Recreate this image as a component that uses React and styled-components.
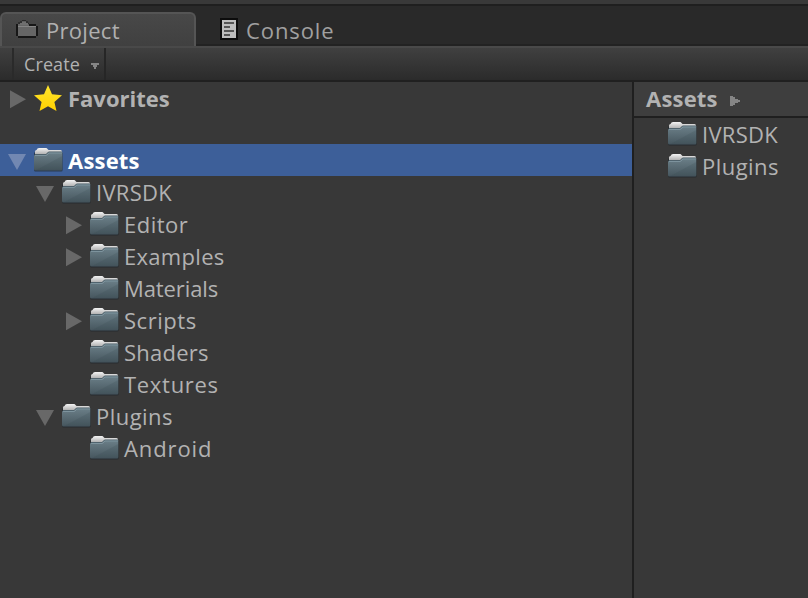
import React from "react";
import styled, { createGlobalStyle } from "styled-components";

const GlobalStyle = createGlobalStyle`
  * { box-sizing: border-box; }
  body { margin: 0; background: #383838; overflow: hidden; }
`;

const Window = styled.div`
  width: 808px;
  height: 598px;
  display: flex;
  flex-direction: column;
  background: #383838;
  color: #b2b2b2;
  font-family: "Open Sans", "Noto Sans", sans-serif;
  font-size: 22px;
  font-kerning: none;
  overflow: hidden;
`;

const TabBar = styled.div`
  flex: none;
  height: 46px;
  display: flex;
  align-items: flex-end;
  padding-top: 6px;
  background: linear-gradient(#393939 0 4px, #1f1f1f 4px 6px, #292929 6px 44px, #222222 44px);
`;

const Tab = styled.div`
  width: ${(p) => p.$width}px;
  height: 34px;
  display: flex;
  align-items: flex-start;
  padding-left: ${(p) => p.$pad}px;
  border: solid ${(p) => (p.$active ? "#555555" : "transparent")};
  border-width: 2px 2px 0 2px;
  border-radius: 6px 6px 0 0;
  background: ${(p) => (p.$active ? "linear-gradient(#484848, #404040)" : "transparent")};
  color: ${(p) => (p.$active ? "#b0b0b0" : "#a0a0a0")};
`;

const TabIcon = styled.svg`
  flex: none;
  display: block;
  margin-top: ${(p) => p.$top}px;
  margin-right: ${(p) => p.$gap}px;
`;

const Label = styled.span`
  line-height: 32px;
  white-space: nowrap;
  letter-spacing: ${(p) => p.$track}px;
  font-weight: ${(p) => (p.$bold ? 700 : 400)};
`;

const Toolbar = styled.div`
  flex: none;
  height: 36px;
  display: flex;
  padding-left: 12px;
  border-top: 2px solid #494949;
  border-bottom: 2px solid #202020;
  background: linear-gradient(#404040, #2b2b2b);
`;

const CreateButton = styled.div`
  width: 94px;
  display: flex;
  align-items: center;
  padding-left: 10px;
  border-left: 2px solid #2a2a2a;
  border-right: 2px solid #262626;
  font-size: 18px;
`;

const Caret = styled.svg`
  display: block;
  margin: 4px 0 0 10px;
`;

const Body = styled.div`
  flex: 1;
  display: flex;
  min-height: 0;
`;

const Tree = styled.div`
  width: 632px;
  display: flex;
  flex-direction: column;
`;

const Row = styled.div`
  flex: none;
  height: 32px;
  display: flex;
  align-items: flex-start;
  padding-left: ${(p) => 8 + p.$depth * 28}px;
  margin-bottom: ${(p) => p.$gap || 0}px;
  background: ${(p) => (p.$selected ? "#3d5f99" : "transparent")};
  color: ${(p) => (p.$selected ? "#ffffff" : "inherit")};
`;

const ArrowSlot = styled.div`
  width: 26px;
  height: 32px;
  color: ${(p) => (p.$selected ? "#7288b2" : "#686868")};
`;

const ItemIcon = styled.svg`
  flex: none;
  display: block;
  width: 30px;
  height: 32px;
  margin-right: ${(p) => p.$gap}px;
`;

const Content = styled.div`
  flex: 1;
  border-left: 2px solid #1f1f1f;
`;

const Breadcrumb = styled.div`
  height: 36px;
  display: flex;
  padding-left: 12px;
  background: #3e3e3e;
  border-bottom: 2px solid #1f1f1f;
`;

const CrumbArrow = styled.svg`
  display: block;
  margin: 14px 0 0 12px;
`;

const Entry = styled.div`
  height: 32px;
  display: flex;
  padding-left: 34px;
`;

function Arrow({ open, selected }) {
  return (
    <ArrowSlot $selected={selected}>
      <svg width="26" height="32" viewBox="0 0 26 32" fill="currentColor">
        {open ? <path d="M0 10H18L9 26Z" /> : <path d="M2 8.2V26.2L18 17.2Z" />}
      </svg>
    </ArrowSlot>
  );
}

function Folder() {
  return (
    <ItemIcon viewBox="0 0 30 32" $gap={4}>
      <defs>
        <linearGradient id="front" x1="0" y1="0" x2="0" y2="1">
          <stop offset="0" stopColor="#6c8089" />
          <stop offset="1" stopColor="#46565e" />
        </linearGradient>
        <linearGradient id="paper" gradientUnits="userSpaceOnUse" x1="0" y1="4" x2="0" y2="11">
          <stop offset="0" stopColor="#f4f4f4" />
          <stop offset="1" stopColor="#a8a8a8" />
        </linearGradient>
      </defs>
      <rect x="0" y="8" width="28.6" height="19.4" rx="1.5" fill="#1e272c" opacity=".65" />
      <path d="M1 12V7.5Q1 6 2.5 6L3.5 4.4Q4 4 5 4H12Q13 4 13.5 5L14.5 6H26.5Q28 6 28 7.5V12Z" fill="url(#paper)" />
      <path d="M0 12Q0 10.5 1.5 10.5H12L14.5 8H28.3V25Q28.3 26.5 27 26.5H1.5Q0 26.5 0 25Z" fill="url(#front)" />
      <path d="M1 10.5H12L14.5 8H28" fill="none" stroke="#50636d" />
      <path d="M1 11.5H12.5L15 9H28" fill="none" stroke="#7d939d" />
      <path d="M28.3 12V25Q28.3 26.5 27 26.5H1.5Z" fill="#34444c" opacity=".16" />
    </ItemIcon>
  );
}

function Star() {
  return (
    <ItemIcon viewBox="0 0 30 32" $gap={4}>
      <defs>
        <linearGradient id="gold" x1="0" y1="0" x2="0" y2="1">
          <stop offset="0" stopColor="#ffe62e" />
          <stop offset="1" stopColor="#ffd000" />
        </linearGradient>
      </defs>
      <path
        d="M14 3L18 12.2L28 13.2L20.4 20L22.5 29L14 24.3L5.5 29L7.6 20L0 13.2L10 12.2Z"
        fill="url(#gold)"
      />
    </ItemIcon>
  );
}

const treeItems = [
  { name: "IVRSDK", depth: 1, arrow: "open", track: 0.3 },
  { name: "Editor", depth: 2, arrow: "closed", track: 0.5 },
  { name: "Examples", depth: 2, arrow: "closed", track: 0.3 },
  { name: "Materials", depth: 2, track: -0.1 },
  { name: "Scripts", depth: 2, arrow: "closed", track: 0.55 },
  { name: "Shaders", depth: 2, track: 0.25 },
  { name: "Textures", depth: 2, track: 0.7 },
  { name: "Plugins", depth: 1, arrow: "open", track: 0.45 },
  { name: "Android", depth: 2, track: 0.9 },
];

export default function App() {
  return (
    <Window>
      <GlobalStyle />
      <TabBar>
        <Tab $active $width={196} $pad={14}>
          <TabIcon width="22" height="19" viewBox="0 0 22 19" $top={6} $gap={8}>
            <path d="M2 4H20V17H2Z" fill="#666666" />
            <path d="M4 3H6V1H10V3H12V5H4Z" fill="#707070" />
            <path d="M1 4V16M2 17H20M21 6V16M13 5H20" fill="none" stroke="#171717" strokeWidth="2" />
            <path d="M2 3H4M4 2H6M6 .5H10M10 2H12M12 3.5H13" fill="none" stroke="#2a2a2a" strokeWidth="1.6" />
            <path d="M2 6.5H20" stroke="#858585" />
          </TabIcon>
          <Label $track={0.3}>Project</Label>
        </Tab>
        <Tab $width={160} $pad={22}>
          <TabIcon width="18" height="22" viewBox="0 0 18 22" $top={4} $gap={8}>
            <rect x="1" y="1" width="16" height="20" fill="#bdbdbd" stroke="#0c0c0c" strokeWidth="2" />
            <path d="M4 5H14M4 9H10M4 13H14M4 17H10" stroke="#555555" strokeWidth="2" />
          </TabIcon>
          <Label $track={0.9}>Console</Label>
        </Tab>
      </TabBar>
      <Toolbar>
        <CreateButton>
          <Label $track={0.1}>Create</Label>
          <Caret width="10" height="6" viewBox="0 0 10 6">
            <path d="M1 0H9V2H1Z" fill="#858585" />
            <path d="M3 2H7V4H6V6H4V4H3Z" fill="#858585" />
          </Caret>
        </CreateButton>
      </Toolbar>
      <Body>
        <Tree>
          <Row $depth={0} $gap={30}>
            <Arrow />
            <Star />
            <Label $bold $track={0}>Favorites</Label>
          </Row>
          <Row $depth={0} $selected>
            <Arrow open selected />
            <Folder />
            <Label $bold $track={0.2}>Assets</Label>
          </Row>
          {treeItems.map((item) => (
            <Row key={item.name} $depth={item.depth}>
              {item.arrow ? <Arrow open={item.arrow === "open"} /> : <ArrowSlot />}
              <Folder />
              <Label $track={item.track}>{item.name}</Label>
            </Row>
          ))}
        </Tree>
        <Content>
          <Breadcrumb>
            <Label $bold $track={0.2}>Assets</Label>
            <CrumbArrow width="10" height="10" viewBox="0 0 10 10">
              <path d="M0 0H3V1H5V3H8V4H10V6H8V7H5V9H3V10H0Z" fill="#858585" />
            </CrumbArrow>
          </Breadcrumb>
          <Entry>
            <Folder />
            <Label $track={0.3}>IVRSDK</Label>
          </Entry>
          <Entry>
            <Folder />
            <Label $track={0.45}>Plugins</Label>
          </Entry>
        </Content>
      </Body>
    </Window>
  );
}
